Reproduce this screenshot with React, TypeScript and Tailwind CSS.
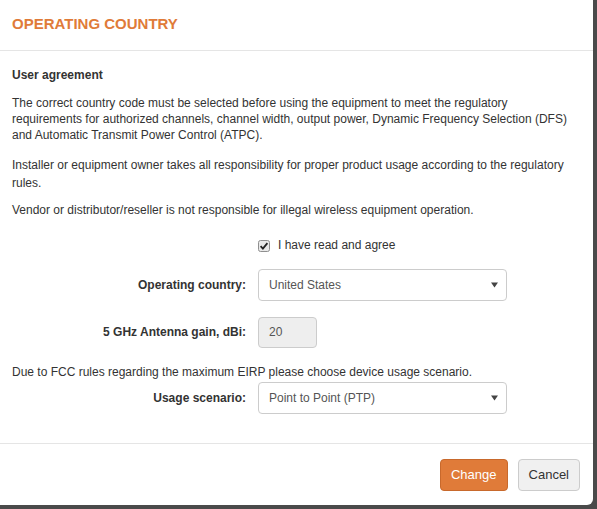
import React from 'react';

const font = { fontFamily: '"Liberation Sans", Arial, sans-serif' };

function Caret() {
  return (
    <svg width="7" height="6" viewBox="0 0 7 6" className="shrink-0">
      <path d="M0 0.5 L7 0.5 L3.5 5.5 Z" fill="#444" />
    </svg>
  );
}

function SelectBox({ value }: { value: string }) {
  return (
    <div className="w-[249px] h-[32px] border border-[#cccccc] rounded-[4px] bg-white flex items-center justify-between pl-[10px] pr-[8px] text-[12px] text-[#555555]">
      <span>{value}</span>
      <Caret />
    </div>
  );
}

function Row({ label, children, className = '' }: { label: string; children: React.ReactNode; className?: string }) {
  return (
    <div className={`flex items-center ${className}`}>
      <div className="w-[234px] text-right font-bold text-[12px] text-[#333333]">{label}</div>
      <div className="ml-[12px]">{children}</div>
    </div>
  );
}

export default function App() {
  return (
    <div className="w-[597px] h-[509px] bg-[#4a4a4a] overflow-hidden" style={font}>
      <div className="w-[593px] h-[505px] bg-white rounded-br-[6px] flex flex-col">
        <div className="h-[51px] border-b border-[#e5e5e5] px-[12px] flex items-center shrink-0">
          <h4 className="text-[15px] font-bold text-[#e07b39] mt-[-2px]">OPERATING COUNTRY</h4>
        </div>

        <div className="px-[12px] pt-[16px] text-[12px] leading-[17px] text-[#333333] flex-1">
          <div className="font-bold mb-[11px]">User agreement</div>
          <p className="mb-[13px] leading-[16px] w-[560px]">
            The correct country code must be selected before using the equipment to meet the regulatory requirements for authorized channels, channel width, output power, Dynamic Frequency Selection (DFS) and Automatic Transmit Power Control (ATPC).
          </p>
          <p className="mb-[10px] leading-[18px] w-[560px]">
            Installer or equipment owner takes all responsibility for proper product usage according to the regulatory rules.
          </p>
          <p className="mb-[18px]">Vendor or distributor/reseller is not responsible for illegal wireless equipment operation.</p>

          <div className="flex items-center ml-[246px] gap-[8px]">
            <svg width="12" height="12" viewBox="0 0 12 12" className="shrink-0">
              <rect x="0.5" y="0.5" width="11" height="11" rx="2" fill="#e9e9e9" stroke="#8f8f8f" />
              <path d="M2.6 6.2 L4.9 8.6 L9.4 3.2" fill="none" stroke="#222" strokeWidth="1.8" />
            </svg>
            <span className="text-[#333333]">I have read and agree</span>
          </div>

          <Row label="Operating country:" className="mt-[15px]">
            <SelectBox value="United States" />
          </Row>

          <Row label="5 GHz Antenna gain, dBi:" className="mt-[16px]">
            <div className="w-[59px] h-[31px] border border-[#cccccc] rounded-[4px] bg-[#eeeeee] flex items-center pl-[10px] text-[12px] text-[#555555]">
              20
            </div>
          </Row>

          <div className="mt-[16px]">Due to FCC rules regarding the maximum EIRP please choose device usage scenario.</div>

          <Row label="Usage scenario:" className="mt-[1px]">
            <SelectBox value="Point to Point (PTP)" />
          </Row>
        </div>

        <div className="h-[62px] border-t border-[#e5e5e5] shrink-0 flex items-start justify-end pt-[15px] pr-[13px] gap-[10px]">
          <button className="h-[32px] px-[10px] rounded-[4px] bg-[#e07b39] border border-[#c8692c] text-white text-[13px]">Change</button>
          <button className="h-[32px] px-[10px] rounded-[4px] bg-[#f0f0f0] border border-[#cccccc] text-[#333333] text-[13px]">Cancel</button>
        </div>
      </div>
    </div>
  );
}
